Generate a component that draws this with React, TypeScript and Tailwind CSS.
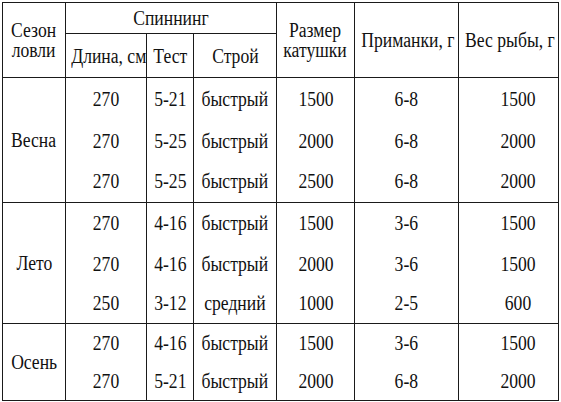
type Row = [string, string, string, string, string, string];

interface Group {
  season: string;
  heights: string[];
  rows: Row[];
}

const groups: Group[] = [
  {
    season: "Весна",
    heights: ["h-[43px]", "h-[40px]", "h-[42px]"],
    rows: [
      ["270", "5-21", "быстрый", "1500", "6-8", "1500"],
      ["270", "5-25", "быстрый", "2000", "6-8", "2000"],
      ["270", "5-25", "быстрый", "2500", "6-8", "2000"],
    ],
  },
  {
    season: "Лето",
    heights: ["h-[41px]", "h-[40px]", "h-[40px]"],
    rows: [
      ["270", "4-16", "быстрый", "1500", "3-6", "1500"],
      ["270", "4-16", "быстрый", "2000", "3-6", "1500"],
      ["250", "3-12", "средний", "1000", "2-5", "600"],
    ],
  },
  {
    season: "Осень",
    heights: ["h-[39px]", "h-[38px]"],
    rows: [
      ["270", "4-16", "быстрый", "1500", "3-6", "1500"],
      ["270", "5-21", "быстрый", "2000", "6-8", "2000"],
    ],
  },
];

// narrow serif look of the scanned table
function T({ children }: { children: React.ReactNode }) {
  return (
    <span className="inline-block scale-x-[0.88] whitespace-nowrap font-['Liberation_Serif',serif] text-[20px] leading-[20px] text-[#111]">
      {children}
    </span>
  );
}

const cell = "border border-[#1a1a1a] p-0 text-center align-middle font-normal font-['Liberation_Serif',serif]";

export default function App() {
  return (
    <div className="h-[402px] w-[561px] bg-white pl-[2px] pt-[2px] font-['Liberation_Serif',serif] text-[20px] leading-[20px] text-[#111]">
      <table className="w-[556px] table-fixed border-collapse font-['Liberation_Serif',serif]">
        <colgroup>
          <col className="w-[63px]" />
          <col className="w-[81px]" />
          <col className="w-[47px]" />
          <col className="w-[83px]" />
          <col className="w-[78px]" />
          <col className="w-[104px]" />
          <col className="w-[100px]" />
        </colgroup>
        <thead>
          <tr className="h-[31px]">
            <th rowSpan={2} className={cell}>
              <T>
                Сезон
                <br />
                ловли
              </T>
            </th>
            <th colSpan={3} className={cell}>
              <T>Спиннинг</T>
            </th>
            <th rowSpan={2} className={cell}>
              <T>
                Размер
                <br />
                катушки
              </T>
            </th>
            <th rowSpan={2} className={cell}>
              <T>Приманки, г</T>
            </th>
            <th rowSpan={2} className={cell}>
              <T>Вес рыбы, г</T>
            </th>
          </tr>
          <tr className="h-[44px]">
            <th className={cell}>
              <T>Длина, см</T>
            </th>
            <th className={cell}>
              <T>Тест</T>
            </th>
            <th className={cell}>
              <T>Строй</T>
            </th>
          </tr>
        </thead>
        <tbody>
          {groups.map((g) =>
            g.rows.map((r, i) => {
              const last = i === g.rows.length - 1;
              const edge = `${i === 0 ? "" : "border-t-0"} ${last ? "" : "border-b-0"}`;
              return (
                <tr key={g.season + i} className={g.heights[i]}>
                  {i === 0 && (
                    <td rowSpan={g.rows.length} className={cell}>
                      <T>{g.season}</T>
                    </td>
                  )}
                  <td className={`${cell} ${edge}`}>
                    <T>{r[0]}</T>
                  </td>
                  <td className={`${cell} ${edge}`}>
                    <T>{r[1]}</T>
                  </td>
                  <td className={`${cell} ${edge}`}>
                    <T>{r[2]}</T>
                  </td>
                  <td className={`${cell} ${edge}`}>
                    <T>{r[3]}</T>
                  </td>
                  <td className={`${cell} ${edge}`}>
                    <T>{r[4]}</T>
                  </td>
                  <td className={`${cell} ${edge} pl-[18px]`}>
                    <T>{r[5]}</T>
                  </td>
                </tr>
              );
            })
          )}
        </tbody>
      </table>
    </div>
  );
}
